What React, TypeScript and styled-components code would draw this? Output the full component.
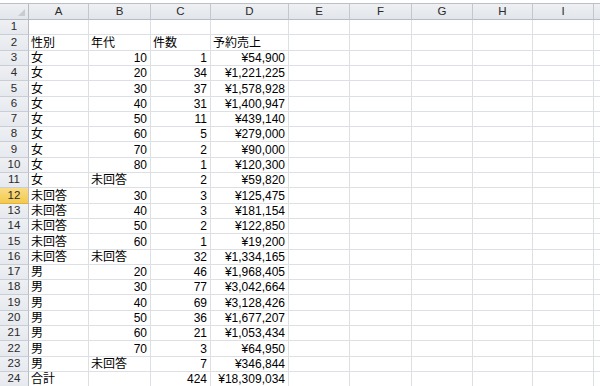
import React from "react";
import styled, { createGlobalStyle } from "styled-components";

const Global = createGlobalStyle`
  html, body { margin: 0; padding: 0; background: #ffffff; }
  body { width: 600px; height: 386px; overflow: hidden; }
`;

const colWidths = [29, 60, 62, 60, 78, 61, 62, 61, 60, 61, 20];
const rowHeights = Array.from({ length: 24 }, (_, i) =>
  Math.round((i + 1) * 15.3) - Math.round(i * 15.3)
);

const Sheet = styled.div`
  padding-top: 3px;
  width: 600px;
  height: 386px;
  overflow: hidden;
  font-family: "Liberation Sans", "Noto Sans CJK JP", sans-serif;
  font-size: 11px;
  color: #000;
`;

const Grid = styled.div`
  display: grid;
  grid-template-columns: ${colWidths.map((w) => `${w}px`).join(" ")};
  grid-template-rows: 16px ${rowHeights.map((h) => `${h}px`).join(" ")};
  border-top: 1px solid #b9c0c9;
`;

const Corner = styled.div`
  box-sizing: border-box;
  background: linear-gradient(#eef0f3, #e2e5ea);
  border-right: 1px solid #b6bcc6;
  border-bottom: 1px solid #b6bcc6;
  position: relative;
  &::after {
    content: "";
    position: absolute;
    right: 3px;
    bottom: 3px;
    width: 0;
    height: 0;
    border-left: 7px solid transparent;
    border-bottom: 7px solid #c8ccd2;
  }
`;

const ColHead = styled.div`
  box-sizing: border-box;
  background: linear-gradient(#eef0f3, #e2e5ea);
  border-right: 1px solid #c3c8d0;
  border-bottom: 1px solid #b6bcc6;
  display: flex;
  align-items: center;
  justify-content: center;
  color: #2a2a2a;
  font-size: 11.5px;
  line-height: 1;
`;

const RowHead = styled.div<{ $active?: boolean }>`
  box-sizing: border-box;
  background: ${(p) =>
    p.$active ? "linear-gradient(#f9dc86, #f3c94f)" : "linear-gradient(#eef0f3, #e6e9ee)"};
  border-right: 1px solid #b6bcc6;
  border-bottom: 1px solid ${(p) => (p.$active ? "#e2b23e" : "#c9ced6")};
  display: flex;
  align-items: center;
  justify-content: center;
  color: #2a2a2a;
  font-size: 11.5px;
  line-height: 1;
`;

const Cell = styled.div<{ $align?: "left" | "right" }>`
  box-sizing: border-box;
  border-right: 1px solid #dcdfe3;
  border-bottom: 1px solid #dcdfe3;
  display: flex;
  align-items: center;
  justify-content: ${(p) => (p.$align === "right" ? "flex-end" : "flex-start")};
  padding: 0 3px 0 2px;
  white-space: nowrap;
  overflow: visible;
  font-size: 12px;
  line-height: 1;
`;

type Row = [string, string, string, string];

const data: Row[] = [
  ["", "", "", ""],
  ["性別", "年代", "件数", "予約売上"],
  ["女", "10", "1", "¥54,900"],
  ["女", "20", "34", "¥1,221,225"],
  ["女", "30", "37", "¥1,578,928"],
  ["女", "40", "31", "¥1,400,947"],
  ["女", "50", "11", "¥439,140"],
  ["女", "60", "5", "¥279,000"],
  ["女", "70", "2", "¥90,000"],
  ["女", "80", "1", "¥120,300"],
  ["女", "未回答", "2", "¥59,820"],
  ["未回答", "30", "3", "¥125,475"],
  ["未回答", "40", "3", "¥181,154"],
  ["未回答", "50", "2", "¥122,850"],
  ["未回答", "60", "1", "¥19,200"],
  ["未回答", "未回答", "32", "¥1,334,165"],
  ["男", "20", "46", "¥1,968,405"],
  ["男", "30", "77", "¥3,042,664"],
  ["男", "40", "69", "¥3,128,426"],
  ["男", "50", "36", "¥1,677,207"],
  ["男", "60", "21", "¥1,053,434"],
  ["男", "70", "3", "¥64,950"],
  ["男", "未回答", "7", "¥346,844"],
  ["合計", "", "424", "¥18,309,034"],
];

const letters = ["A", "B", "C", "D", "E", "F", "G", "H", "I", ""];

const isNum = (s: string) => /^[¥\d,]+$/.test(s);

export default function App() {
  return (
    <>
      <Global />
      <Sheet>
        <Grid>
          <Corner />
          {letters.map((l, i) => (
            <ColHead key={`h${i}`}>{l}</ColHead>
          ))}
          {data.map((row, r) => (
            <React.Fragment key={`r${r}`}>
              <RowHead $active={r === 11}>{r + 1}</RowHead>
              {row.map((v, c) => (
                <Cell key={`c${r}-${c}`} $align={isNum(v) ? "right" : "left"}>
                  {v}
                </Cell>
              ))}
              {Array.from({ length: 6 }, (_, k) => (
                <Cell key={`e${r}-${k}`} />
              ))}
            </React.Fragment>
          ))}
        </Grid>
      </Sheet>
    </>
  );
}
